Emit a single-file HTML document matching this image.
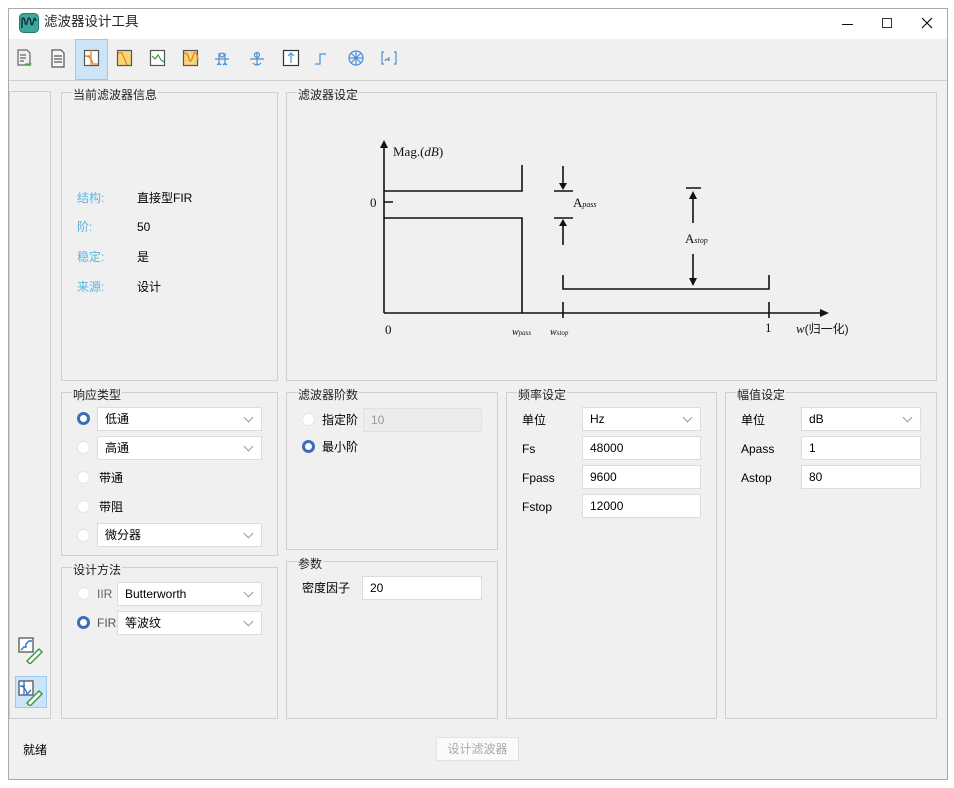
<!DOCTYPE html>
<html><head><meta charset="utf-8">
<style>
*{box-sizing:border-box;margin:0;padding:0}
body{width:954px;height:788px;background:#fff;font-family:"Liberation Sans","Noto Sans CJK SC",sans-serif;font-size:12px;color:#000;position:relative;overflow:hidden}
.a{position:absolute}
.win{left:8px;top:8px;width:940px;height:772px;border:1px solid #aaa;background:#f0f0f0}
.title{left:9px;top:9px;width:938px;height:30px;background:#fff}
.grp{position:absolute;border:1px solid #cfcfcf}
.gt{position:absolute;top:-4px;left:10px;background:#f0f0f0;padding:0 1px;line-height:13px;font-size:12px;color:#222}
.inp{position:absolute;background:#fff;border:1px solid #dcdcdc;height:24px;line-height:22px;padding-left:7px;font-size:12px}
.inp.dis{background:#ececec;color:#999;border-color:#e0e0e0}
.chev{position:absolute;right:9px;top:6px;width:7px;height:7px;border-right:1px solid #999;border-bottom:1px solid #999;transform:rotate(45deg)}
.rad{position:absolute;width:13px;height:13px;border-radius:50%;background:#fff;border:1px solid #e4e4e4}
.rad.on{background:#fff;border:3.5px solid #3a6db5}
.lbl{position:absolute;font-size:12px;line-height:14px}
.blue{color:#5ab6e0}
</style></head><body>
<div class="a win"></div>
<div class="a title"></div>
<svg class="a" style="left:19px;top:13px" width="20" height="20" viewBox="0 0 20 20"><rect x="0.5" y="0.5" width="19" height="19" rx="4" fill="#3aa89a" stroke="#267a6f"/><path d="M3 15 V6 Q5 3 6 9 Q7 15 9 6 Q11 3 12 10 Q13 15 15 6 Q16 4 17 8" fill="none" stroke="#123" stroke-width="1.3"/></svg>
<div class="lbl" style="left:44px;top:15px;font-size:13.5px;color:#222">滤波器设计工具</div>
<div class="a" style="left:842px;top:24px;width:11px;height:1px;background:#111"></div>
<div class="a" style="left:882px;top:18px;width:10px;height:10px;border:1px solid #333"></div>
<svg class="a" style="left:921px;top:17px" width="12" height="12"><path d="M1 1L11 11M11 1L1 11" stroke="#111" stroke-width="1.2"/></svg>
<div class="a" style="left:9px;top:80px;width:938px;height:1px;background:#d0d0d0"></div>
<div class="a" style="left:75px;top:39px;width:33px;height:41px;background:#cce4f7;border:1px solid #99c9ef"></div>
<svg class="a" style="left:9px;top:39px" width="400" height="40">
<g fill="none" stroke-width="1.2">
<path d="M9 11h9l3 3v12H9z" stroke="#666"/><path d="M11 16h6M11 19h6M11 22h4" stroke="#666"/><path d="M16 25h6M20 23l2 2-2 2" stroke="#4caf50"/>
<path d="M43 11h9l3 3v14H43z" stroke="#555" fill="#f8f8f8"/><path d="M45 17h8M45 20h8M45 23h8" stroke="#555"/>
<rect x="75.5" y="11.5" width="14" height="15" stroke="#555" fill="#fff"/><path d="M76 17h6M82 11v15M76 17q6 0 8 8h5" stroke="#e67e22"/>
<rect x="108.5" y="11.5" width="14" height="15" stroke="#555" fill="#f7d57a"/><path d="M109 14h4l5 12" stroke="#e67e22"/>
<rect x="141.5" y="11.5" width="14" height="15" stroke="#555" fill="#fff"/><path d="M143 17l3 3 3-4 3 5 3 2" stroke="#2e9a3e"/>
<rect x="174.5" y="11.5" width="14" height="15" stroke="#555" fill="#f7d57a"/><path d="M175 14q4 0 5 6t4-3 5 4" stroke="#e67e22"/>
<g stroke="#4a90d9"><path d="M206 20h14M210 14v12M216 14v12M208 26l2-2 2 2M214 26l2-2 2 2"/><circle cx="213" cy="16" r="2"/></g>
<g stroke="#4a90d9"><path d="M241 20h14M248 13v13M244 24q4 4 8 0"/><circle cx="248" cy="16" r="2.5"/></g>
<rect x="274.5" y="11.5" width="15" height="15" stroke="#333" fill="#fff"/><path d="M282 24V14M279 17l3-3 3 3" stroke="#4a90d9"/>
<path d="M306 25h5V15h6" stroke="#4a90d9"/>
<circle cx="347" cy="19" r="7" stroke="#4a90d9"/><path d="M342 14l10 10M352 14l-10 10M347 12v14M340 19h14" stroke="#4a90d9"/>
<path d="M375 13h-2v12h2M385 13h2v12h-2M376 22q2-4 4 0M380 22v-4" stroke="#4a90d9"/>
</g></svg>
<div class="grp" style="left:9px;top:91px;width:42px;height:628px"></div>
<svg class="a" style="left:17px;top:636px" width="28" height="28"><rect x="2" y="2" width="14" height="14" fill="#fff" stroke="#555" stroke-width="1.3"/><path d="M4 14l3-3h2v-3l3-3h3" fill="none" stroke="#2a6fd0" stroke-width="1.4"/><path d="M10 25l12-12 3 3-12 12z" fill="#fff" stroke="#3a9a4a" stroke-width="1.5"/></svg>
<div class="a" style="left:15px;top:676px;width:32px;height:32px;background:#cce4f7;border:1px solid #99c9ef"></div>
<svg class="a" style="left:17px;top:678px" width="28" height="28"><rect x="2" y="3" width="14" height="14" fill="#fff" stroke="#555" stroke-width="1.3"/><path d="M3 8h5M7 3v14M3 8q5 0 7 8l4-4" fill="none" stroke="#2a6fd0" stroke-width="1.3"/><path d="M10 25l12-12 3 3-12 12z" fill="#fff" stroke="#3a9a4a" stroke-width="1.5"/></svg>
<div class="grp" style="left:61px;top:92px;width:217px;height:289px"><div class="gt">当前滤波器信息</div></div>
<div class="lbl blue" style="left:77px;top:191px">结构:</div><div class="lbl" style="left:137px;top:191px">直接型FIR</div>
<div class="lbl blue" style="left:77px;top:220px">阶:</div><div class="lbl" style="left:137px;top:220px">50</div>
<div class="lbl blue" style="left:77px;top:250px">稳定:</div><div class="lbl" style="left:137px;top:250px">是</div>
<div class="lbl blue" style="left:77px;top:280px">来源:</div><div class="lbl" style="left:137px;top:280px">设计</div>
<div class="grp" style="left:286px;top:92px;width:651px;height:289px"><div class="gt">滤波器设定</div></div>
<svg class="a" style="left:286px;top:92px" width="650" height="289" font-family="Liberation Serif,serif">
<g transform="translate(-286,-92)" stroke="#111" stroke-width="1.6" fill="none">
<path d="M384 313V146M384 313H820"/>
<path d="M384 191H522V165M384 218H522V313M384 202h9"/>
<path d="M554 191h19M554 218h19M563 166v20M563 245v-22M686 188h15M693 223v-30M693 254v30"/>
<path d="M563 275v14H769v-14M563 302v16M769 302v16"/>
<path d="M380 148l4-8 4 8z M559 183l4 7 4-7z M559 226l4-7 4 7z M689 199l4-8 4 8z M689 278l4 8 4-8z M820 309l9 4-9 4z" fill="#111" stroke="none"/>
</g>
<g fill="#111" font-size="13">
<text x="107" y="64">Mag.(<tspan font-style="italic">dB</tspan>)</text>
<text x="84" y="115">0</text>
<text x="99" y="242">0</text>
<text x="287" y="115">A<tspan font-size="8" font-style="italic">pass</tspan></text>
<text x="399" y="151">A<tspan font-size="8" font-style="italic">stop</tspan></text>
<text x="226" y="243" font-size="10" font-style="italic">w<tspan font-size="7">pass</tspan></text>
<text x="264" y="243" font-size="10" font-style="italic">w<tspan font-size="7">stop</tspan></text>
<text x="479" y="240">1</text>
<text x="510" y="241"><tspan font-style="italic">w</tspan><tspan font-family="Liberation Sans,Noto Sans CJK SC,sans-serif" font-size="12">(归一化)</tspan></text>
</g></svg>
<div class="grp" style="left:61px;top:392px;width:217px;height:164px"><div class="gt">响应类型</div></div>
<div class="rad on" style="left:77px;top:412px"></div><div class="inp" style="left:97px;top:407px;width:165px">低通<span class="chev"></span></div>
<div class="rad" style="left:77px;top:441px"></div><div class="inp" style="left:97px;top:436px;width:165px">高通<span class="chev"></span></div>
<div class="rad" style="left:77px;top:471px"></div><div class="lbl" style="left:99px;top:471px">带通</div>
<div class="rad" style="left:77px;top:500px"></div><div class="lbl" style="left:99px;top:500px">带阻</div>
<div class="rad" style="left:77px;top:529px"></div><div class="inp" style="left:97px;top:523px;width:165px">微分器<span class="chev"></span></div>
<div class="grp" style="left:61px;top:567px;width:217px;height:152px"><div class="gt">设计方法</div></div>
<div class="rad" style="left:77px;top:587px"></div><div class="lbl" style="left:97px;top:587px;color:#666">IIR</div>
<div class="inp" style="left:117px;top:582px;width:145px">Butterworth<span class="chev"></span></div>
<div class="rad on" style="left:77px;top:616px"></div><div class="lbl" style="left:97px;top:616px;color:#555">FIR</div>
<div class="inp" style="left:117px;top:611px;width:145px">等波纹<span class="chev"></span></div>
<div class="grp" style="left:286px;top:392px;width:212px;height:158px"><div class="gt">滤波器阶数</div></div>
<div class="rad" style="left:302px;top:413px"></div><div class="lbl" style="left:322px;top:413px">指定阶</div>
<div class="inp dis" style="left:363px;top:408px;width:119px">10</div>
<div class="rad on" style="left:302px;top:440px"></div><div class="lbl" style="left:322px;top:440px">最小阶</div>
<div class="grp" style="left:286px;top:561px;width:212px;height:158px"><div class="gt">参数</div></div>
<div class="lbl" style="left:302px;top:581px">密度因子</div>
<div class="inp" style="left:362px;top:576px;width:120px">20</div>
<div class="grp" style="left:506px;top:392px;width:211px;height:327px"><div class="gt">频率设定</div></div>
<div class="lbl" style="left:522px;top:413px">单位</div><div class="inp" style="left:582px;top:407px;width:119px">Hz<span class="chev"></span></div>
<div class="lbl" style="left:522px;top:442px">Fs</div><div class="inp" style="left:582px;top:436px;width:119px">48000</div>
<div class="lbl" style="left:522px;top:471px">Fpass</div><div class="inp" style="left:582px;top:465px;width:119px">9600</div>
<div class="lbl" style="left:522px;top:500px">Fstop</div><div class="inp" style="left:582px;top:494px;width:119px">12000</div>
<div class="grp" style="left:725px;top:392px;width:212px;height:327px"><div class="gt">幅值设定</div></div>
<div class="lbl" style="left:741px;top:413px">单位</div><div class="inp" style="left:801px;top:407px;width:120px">dB<span class="chev"></span></div>
<div class="lbl" style="left:741px;top:442px">Apass</div><div class="inp" style="left:801px;top:436px;width:120px">1</div>
<div class="lbl" style="left:741px;top:471px">Astop</div><div class="inp" style="left:801px;top:465px;width:120px">80</div>
<div class="lbl" style="left:23px;top:743px">就绪</div>
<div class="a" style="left:436px;top:737px;width:83px;height:24px;background:#fafafa;border:1px solid #e2e2e2;color:#aaa;text-align:center;line-height:22px">设计滤波器</div>
</body></html>
